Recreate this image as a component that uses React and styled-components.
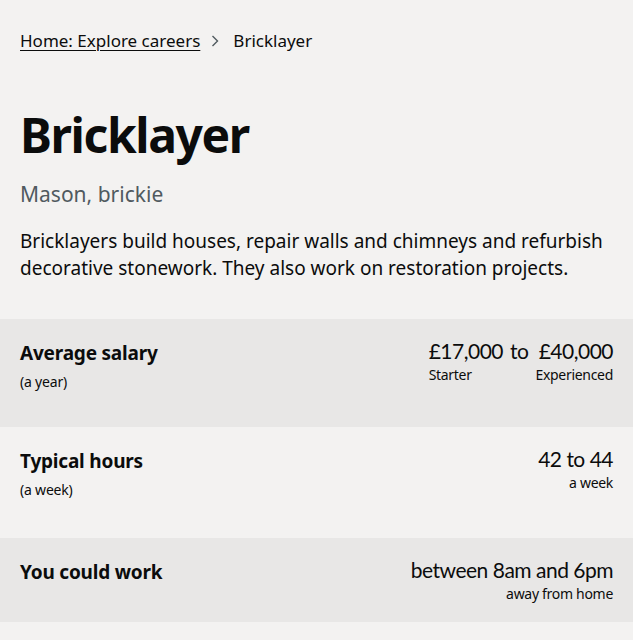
import React from 'react';
import styled, { createGlobalStyle } from 'styled-components';

const GlobalStyle = createGlobalStyle`
  html, body {
    margin: 0;
    padding: 0;
    background: #f3f2f1;
  }
  body {
    font-family: "Noto Sans", "Liberation Sans", Arial, sans-serif;
    color: #0b0c0c;
    -webkit-font-smoothing: antialiased;
  }
`;

const Page = styled.main`
  width: 633px;
  min-height: 640px;
  background: #f3f2f1;
`;

const Intro = styled.section`
  padding: 30px 20px 37px;
`;

const Breadcrumbs = styled.nav`
  display: flex;
  align-items: center;
  font-size: 17px;
  line-height: 22px;
  color: #0b0c0c;
`;

const CrumbLink = styled.a`
  color: #0b0c0c;
  text-decoration: underline;
  text-underline-offset: 3px;
  text-decoration-thickness: 1px;
`;

const Chevron = styled.svg`
  width: 8px;
  height: 12px;
  margin: 0 14px 0 11px;
  color: #505a5f;
`;

const Title = styled.h1`
  margin: 56px 0 0;
  font-size: 48px;
  line-height: 54px;
  font-weight: 700;
  letter-spacing: -1.4px;
`;

const AltTitle = styled.p`
  margin: 18px 0 0;
  font-size: 21px;
  line-height: 28px;
  color: #505a5f;
`;

const Summary = styled.p`
  margin: 20px 0 0;
  font-size: 19px;
  line-height: 27px;
  color: #0b0c0c;
`;

const FactRow = styled.div`
  display: flex;
  justify-content: space-between;
  align-items: flex-start;
  padding: 22px 20px 0;
  height: ${(p) => p.$height}px;
  box-sizing: border-box;
  background: ${(p) => (p.$shaded ? '#e8e7e6' : '#f3f2f1')};
`;

const FactLabel = styled.div`
  display: flex;
  flex-direction: column;
  gap: 8px;
`;

const FactName = styled.h2`
  margin: 0;
  font-size: 19px;
  line-height: 24px;
  font-weight: 700;
  letter-spacing: -0.2px;
`;

const FactUnit = styled.span`
  font-size: 14px;
  line-height: 18px;
  letter-spacing: -0.2px;
  color: #0b0c0c;
`;

const FactValue = styled.div`
  display: flex;
  flex-direction: column;
  align-items: flex-end;
  text-align: right;
  margin-top: -3px;
`;

const Amount = styled.span`
  justify-self: ${(p) => p.$align || 'start'};
  font-family: Lato, "Noto Sans", sans-serif;
  font-size: 21px;
  line-height: 26px;
  letter-spacing: -0.5px;
  color: #0b0c0c;
`;

const Note = styled.span`
  margin-top: 2px;
  font-size: 14px;
  line-height: 18px;
  letter-spacing: -0.3px;
  color: #0b0c0c;
`;

const SalaryGrid = styled.div`
  display: grid;
  grid-template-columns: auto auto auto;
  column-gap: 7px;
  align-items: baseline;
  margin-top: -3px;
`;

const SalaryNote = styled(Note)`
  grid-column: ${(p) => p.$col};
  text-align: ${(p) => p.$align};
`;

const App = () => {
  return (
    <>
      <GlobalStyle />
      <Page>
        <Intro>
          <Breadcrumbs>
            <CrumbLink href="#">Home: Explore careers</CrumbLink>
            <Chevron viewBox="0 0 8 12" fill="none">
              <path d="M1.5 1l5 5-5 5" stroke="currentColor" strokeWidth="1.4" />
            </Chevron>
            <span>Bricklayer</span>
          </Breadcrumbs>
          <Title>Bricklayer</Title>
          <AltTitle>Mason, brickie</AltTitle>
          <Summary>
            Bricklayers build houses, repair walls and chimneys and refurbish decorative
            stonework. They also work on restoration projects.
          </Summary>
        </Intro>

        <FactRow $shaded $height={108}>
          <FactLabel>
            <FactName>Average salary</FactName>
            <FactUnit>(a year)</FactUnit>
          </FactLabel>
          <SalaryGrid>
            <Amount>£17,000</Amount>
            <Amount>to</Amount>
            <Amount $align="end">£40,000</Amount>
            <SalaryNote $col={1} $align="left">Starter</SalaryNote>
            <SalaryNote $col={3} $align="right">Experienced</SalaryNote>
          </SalaryGrid>
        </FactRow>

        <FactRow $height={111}>
          <FactLabel>
            <FactName>Typical hours</FactName>
            <FactUnit>(a week)</FactUnit>
          </FactLabel>
          <FactValue>
            <Amount>42 to 44</Amount>
            <Note>a week</Note>
          </FactValue>
        </FactRow>

        <FactRow $shaded $height={84}>
          <FactLabel>
            <FactName>You could work</FactName>
          </FactLabel>
          <FactValue>
            <Amount>between 8am and 6pm</Amount>
            <Note>away from home</Note>
          </FactValue>
        </FactRow>
      </Page>
    </>
  );
};

export default App;
